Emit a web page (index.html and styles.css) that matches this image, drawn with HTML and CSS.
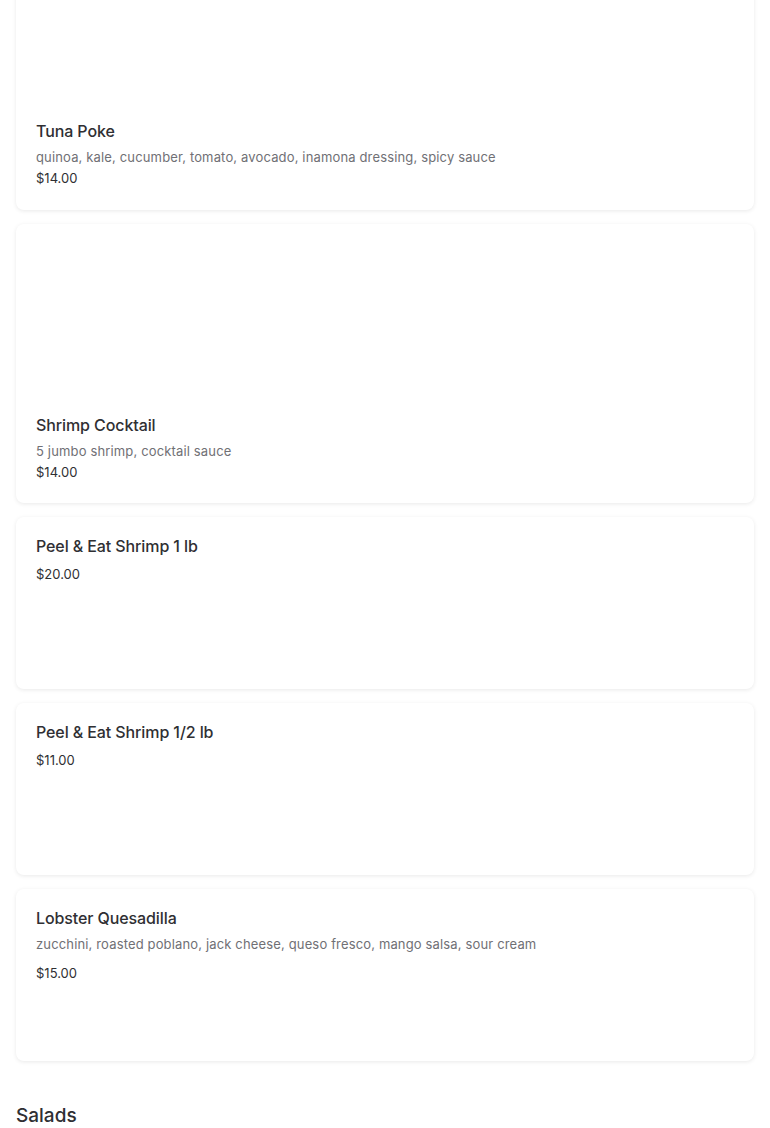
FILE: index.html
```html
<!DOCTYPE html>
<html>
<head>
<meta charset="utf-8">
<link rel="stylesheet" href="styles.css">
</head>
<body>
<div class="menu">
  <div class="card card-img">
    <div class="img"></div>
    <div class="body">
      <div class="title">Tuna Poke</div>
      <div class="desc">quinoa, kale, cucumber, tomato, avocado, inamona dressing, spicy sauce</div>
      <div class="price">$14.00</div>
    </div>
  </div>
  <div class="card card-img">
    <div class="img"></div>
    <div class="body">
      <div class="title">Shrimp Cocktail</div>
      <div class="desc">5 jumbo shrimp, cocktail sauce</div>
      <div class="price">$14.00</div>
    </div>
  </div>
  <div class="card card-plain">
    <div class="body">
      <div class="title">Peel &amp; Eat Shrimp 1 lb</div>
      <div class="price">$20.00</div>
    </div>
  </div>
  <div class="card card-plain">
    <div class="body">
      <div class="title">Peel &amp; Eat Shrimp 1/2 lb</div>
      <div class="price">$11.00</div>
    </div>
  </div>
  <div class="card card-plain">
    <div class="body">
      <div class="title">Lobster Quesadilla</div>
      <div class="desc">zucchini, roasted poblano, jack cheese, queso fresco, mango salsa, sour cream</div>
      <div class="price">$15.00</div>
    </div>
  </div>
  <h2 class="section">Salads</h2>
</div>
</body>
</html>
```

FILE: styles.css
```css
html, body {
  margin: 0;
  padding: 0;
  background: #ffffff;
}
body {
  font-family: Inter, "Open Sans", sans-serif;
  color: #2f2f33;
}
.menu {
  margin-top: -70px;
  padding: 0 16px;
  display: flex;
  flex-direction: column;
  gap: 14px;
}
.card {
  background: #fff;
  border-radius: 8px;
  box-shadow: 0 1px 4px rgba(0, 0, 0, 0.09);
  display: flex;
  flex-direction: column;
}
.img {
  height: 172px;
}
.body {
  padding: 17px 20px 21.5px;
  display: flex;
  flex-direction: column;
}
.card-plain {
  min-height: 172px;
  box-sizing: border-box;
}
.title {
  font-size: 16px;
  font-weight: 500;
  line-height: 24px;
  color: #2f2f33;
  letter-spacing: -0.1px;
}
.desc {
  font-size: 13px;
  line-height: 20px;
  color: #707075;
  margin-top: 4px;
  letter-spacing: 0.15px;
}
.price {
  font-size: 13px;
  line-height: 20px;
  color: #2f2f33;
  margin-top: 1px;
}
.card-plain .price {
  margin-top: 6px;
}
.card-plain .desc + .price {
  margin-top: 9px;
}
.section {
  margin: 28px 0 0;
  font-size: 19px;
  font-weight: 500;
  line-height: 26px;
  color: #2f2f33;
  letter-spacing: 0;
}
```
